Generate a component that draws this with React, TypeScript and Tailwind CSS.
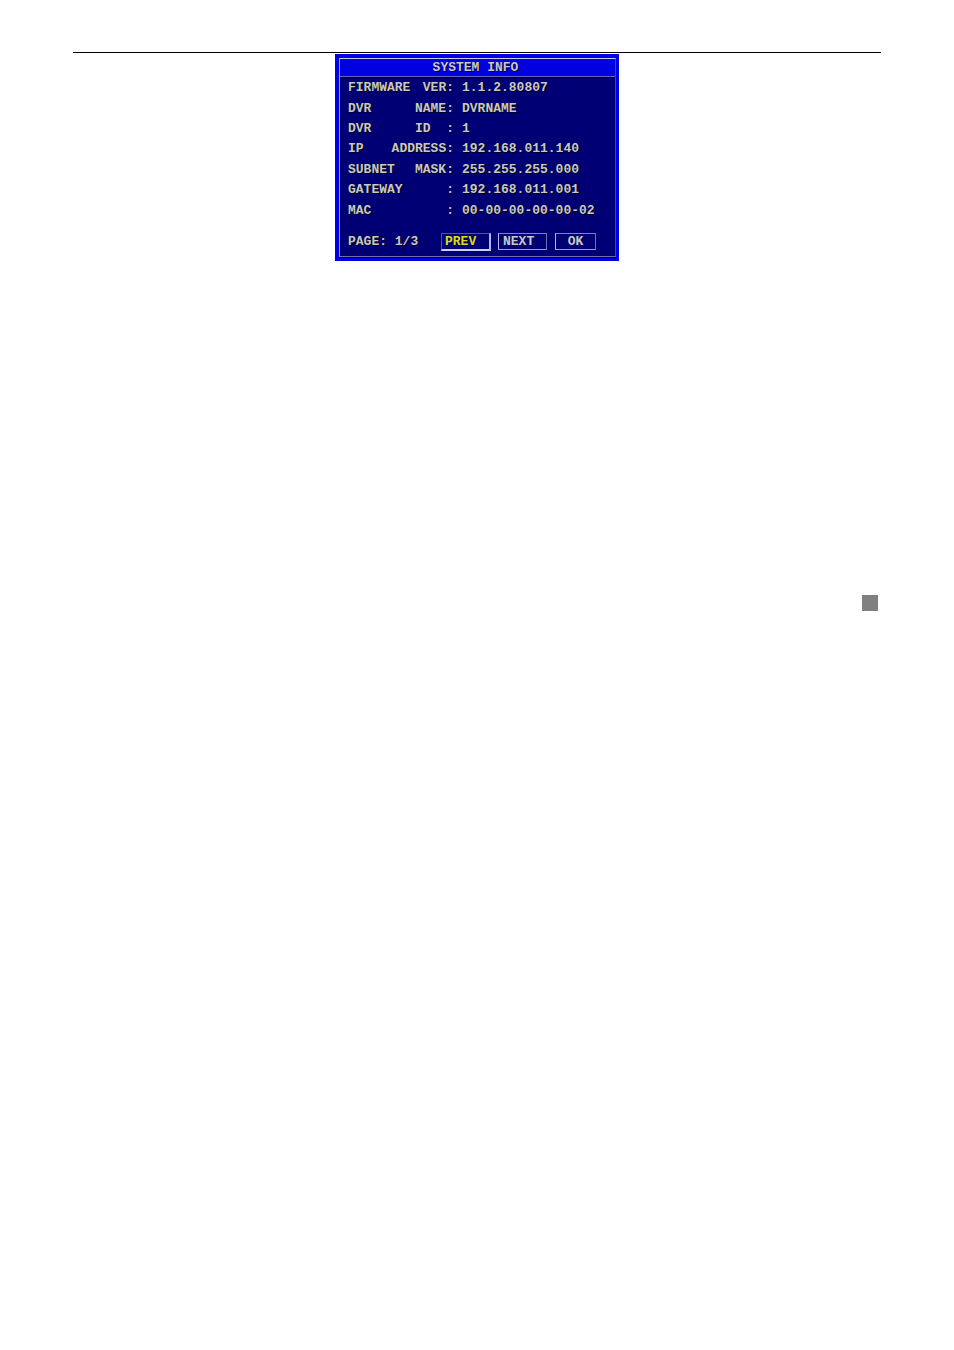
type InfoRow = { first: string; second: string; value: string };

const rows: InfoRow[] = [
  { first: 'FIRMWARE', second: 'VER', value: '1.1.2.80807' },
  { first: 'DVR', second: 'NAME', value: 'DVRNAME' },
  { first: 'DVR', second: 'ID  ', value: '1' },
  { first: 'IP', second: 'ADDRESS', value: '192.168.011.140' },
  { first: 'SUBNET', second: 'MASK', value: '255.255.255.000' },
  { first: 'GATEWAY', second: '', value: '192.168.011.001' },
  { first: 'MAC', second: '', value: '00-00-00-00-00-02' },
];

function SystemInfo() {
  return (
    <section className="w-[284px] bg-[#0000e6] pt-1 pr-[3px] pb-1 pl-1 font-['Liberation_Mono',monospace] text-[13px] leading-4 font-bold text-[#c9c9c0] [text-shadow:1px_1px_0_#000018]">
      <div className="border border-t-[#c8c8e8] border-r-[#4444b0] border-b-[#7070a8] border-l-[#9898ff] bg-[#000074] shadow-[0_1px_0_#000030]">
        <h1 className="border-b border-[#6464c0] bg-[#0000e0] pr-1 text-center leading-[17px] shadow-[0_1px_0_#000010]">
          SYSTEM INFO
        </h1>
        <table className="mt-px h-[143px] w-full">
          <tbody>
            {rows.map((row, index) => (
              <tr key={index}>
                <th scope="row" className="w-[114px] p-0 pl-2 text-left font-bold">
                  <span className="flex whitespace-pre">
                    <span>{row.first}</span>
                    <span className="ml-auto">{row.second}</span>
                    <span>:</span>
                  </span>
                </th>
                <td className="p-0 pl-2">{row.value}</td>
              </tr>
            ))}
          </tbody>
        </table>
        <div className="flex items-center pt-3 pb-[5px] pl-2">
          <p className="w-[93px]">PAGE: 1/3</p>
          <div className="flex gap-[7px]">
            <button
              type="button"
              className="h-[18px] w-[50px] border border-t-[#50509c] border-r-2 border-r-[#b4b4ec] border-b-2 border-b-[#d0d0f4] border-l-[#50509c] pl-[3px] text-left leading-[15px] text-[#dcdc10]"
            >
              PREV
            </button>
            <button
              type="button"
              className="h-[17px] w-[49px] border border-t-[#8080c0] border-r-[#7070b0] border-b-[#a0a0d0] border-l-[#b4b4f0] pl-1 text-left leading-[15px]"
            >
              NEXT
            </button>
            <button
              type="button"
              className="ml-px h-[17px] w-[41px] border border-t-[#8080c0] border-r-[#7070b0] border-b-[#a0a0d0] border-l-[#b4b4f0] text-center leading-[15px]"
            >
              OK
            </button>
          </div>
        </div>
      </div>
    </section>
  );
}

export default function App() {
  return (
    <main className="min-h-screen bg-white px-[73px] pt-[52px]">
      <hr className="border-t border-black" />
      <div className="mt-px flex justify-center">
        <SystemInfo />
      </div>
      <div className="mt-[334px] flex justify-end pr-[3px]">
        <div className="size-4 bg-[#808080]" />
      </div>
    </main>
  );
}
